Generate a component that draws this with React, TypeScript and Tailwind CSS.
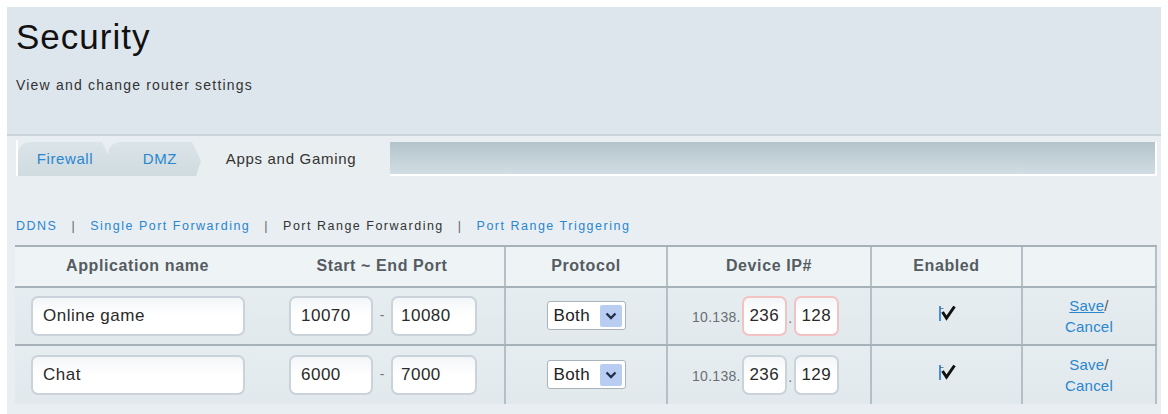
import React from 'react';

const FONT = "font-['Liberation_Sans',Arial,sans-serif]";

// columns: app name | ports | protocol | device ip | enabled | actions
const COLS = 'grid grid-cols-[245px_246px_162px_204px_151px_134px]';

type Row = {
  name: string;
  start: string;
  end: string;
  ip3: string;
  ip4: string;
  warn?: boolean;
  underline?: boolean;
};

const rows: Row[] = [
  { name: 'Online game', start: '10070', end: '10080', ip3: '236', ip4: '128', warn: true, underline: true },
  { name: 'Chat', start: '6000', end: '7000', ip3: '236', ip4: '129' },
];

function TextBox({ value, className = '', warn = false }: { value: string; className?: string; warn?: boolean }) {
  return (
    <div
      className={`h-[40px] flex items-center rounded-[7px] border-2 bg-gradient-to-b from-[#f3f6f8] via-white to-white text-[17px] tracking-[0.5px] text-[#2a2a2a] ${
        warn ? 'border-[#f3c2c2]' : 'border-[#c9d3d9]'
      } ${className}`}
    >
      {value}
    </div>
  );
}

function Check() {
  return (
    <svg width="18" height="18" viewBox="0 0 18 18">
      <rect x="1" y="2" width="2" height="15" fill="#4a90d9" />
      <path d="M4 4 L4 4.5 M4.5 8 L8.5 14 L16.5 2.5" fill="none" stroke="#111" strokeWidth="3" />
    </svg>
  );
}

function Select() {
  return (
    <div className="w-[79px] h-[29px] flex items-center justify-between rounded-[3px] border border-[#a9b3ba] bg-white pl-[6px] pr-[3px]">
      <span className="text-[17px] tracking-[0.4px] text-[#222]">Both</span>
      <span className="w-[22px] h-[22px] flex items-center justify-center bg-[#b9cdf2] rounded-[2px]">
        <svg width="12" height="8" viewBox="0 0 12 8">
          <path d="M1.5 1.5 L6 6 L10.5 1.5" fill="none" stroke="#22304a" strokeWidth="2.4" />
        </svg>
      </span>
    </div>
  );
}

function Tab({ label, active = false, first = false }: { label: string; active?: boolean; first?: boolean }) {
  if (active) {
    return (
      <div className="-ml-[12px] h-[36px] w-[194px] [clip-path:polygon(12px_0,178px_0,194px_100%,0_100%)] bg-[#e9eef1] flex items-center justify-center pt-[2px] pr-[4px] text-[15px] tracking-[0.7px] text-[#333]">
        {label}
      </div>
    );
  }
  return (
    <div
      className={`${first ? '' : '-ml-[10px]'} h-[34px] w-[100px] rounded-t-[12px] [clip-path:polygon(0_0,84px_0,100px_100%,0_100%)] bg-gradient-to-b from-[#dbe4e8] to-[#cfdbe0] flex items-center justify-center text-[15px] tracking-[0.6px] text-[#2a86cf]`}
    >
      <span className={first ? '-ml-[6px]' : 'ml-[4px]'}>{label}</span>
    </div>
  );
}

export default function App() {
  return (
    <div className={`w-[1168px] h-[414px] bg-white pt-[7px] px-[7px] ${FONT}`}>
      {/* page heading */}
      <div className="h-[129px] bg-[#dde6ed] border-b-2 border-[#c9d4db] pl-[9px] pt-[10px]">
        <h1 className="text-[35px] leading-[40px] tracking-[1px] text-[#111]">Security</h1>
        <p className="mt-[18px] text-[14px] tracking-[1.2px] text-[#333]">View and change router settings</p>
      </div>

      <div className="h-[278px] bg-[#e8eef1] pt-[4px] pl-[9px] pr-[4px]">
        {/* tabs */}
        <div className="flex items-end h-[36px] border-l-2 border-white">
          <Tab label="Firewall" first />
          <Tab label="DMZ" />
          <Tab label="Apps and Gaming" active />
          <div className="flex-1 h-[34px] bg-gradient-to-b from-[#b4c4cb] to-[#d1dde3] border-r-2 border-b-2 border-white" />
        </div>

        {/* sub navigation */}
        <div className="mt-[41px] flex items-center text-[12.5px] tracking-[1.5px] text-[#2a86cf]">
          <span>DDNS</span>
          <span className="mx-[14px] text-[#666]">|</span>
          <span>Single Port Forwarding</span>
          <span className="mx-[14px] text-[#666]">|</span>
          <span className="text-[#333]">Port Range Forwarding</span>
          <span className="mx-[14px] text-[#666]">|</span>
          <span>Port Range Triggering</span>
        </div>

        {/* table */}
        <div className="mt-[9px] -ml-[1px] w-[1142px] border-t-2 border-[#a6b1b8]">
          <div className={`${COLS} h-[41px] bg-[#eef3f6] border-b-2 border-[#a6b1b8] text-[16px] font-bold tracking-[0.6px] text-[#555c61]`}>
            <div className="flex items-center justify-center">Application name</div>
            <div className="flex items-center justify-center border-r-2 border-[#b5bfc5]">Start ~ End Port</div>
            <div className="flex items-center justify-center border-r-2 border-[#b5bfc5]">Protocol</div>
            <div className="flex items-center justify-center border-r-2 border-[#b5bfc5]">Device IP#</div>
            <div className="flex items-center justify-center border-r-2 border-[#b5bfc5]">Enabled</div>
            <div className="border-r-2 border-[#b5bfc5]" />
          </div>

          {rows.map((r, i) => (
            <div
              key={r.name}
              className={`${COLS} h-[58px] bg-gradient-to-b from-[#e6edf1] to-[#e2e9ed] ${
                i === 0 ? 'border-b-2 border-[#a6b1b8]' : 'h-[56px]'
              }`}
            >
              <div className="flex items-center pl-[16px]">
                <TextBox value={r.name} className="w-[214px] pl-[10px]" />
              </div>
              <div className="flex items-center pl-[29px] border-r-2 border-[#b5bfc5]">
                <TextBox value={r.start} className="w-[84px] pl-[10px]" />
                <span className="w-[18px] text-center text-[14px] text-[#777]">-</span>
                <TextBox value={r.end} className="w-[86px] pl-[8px]" />
              </div>
              <div className="flex items-center justify-center border-r-2 border-[#b5bfc5]">
                <Select />
              </div>
              <div className="flex items-center pl-[24px] border-r-2 border-[#b5bfc5]">
                <span className="text-[14px] tracking-[0.3px] text-[#6a6f73] mt-[4px]">10.138.</span>
                <TextBox value={r.ip3} warn={r.warn} className="w-[45px] justify-center ml-[1px]" />
                <span className="w-[7px] text-center text-[14px] text-[#6a6f73] mt-[6px]">.</span>
                <TextBox value={r.ip4} warn={r.warn} className="w-[45px] justify-center" />
              </div>
              <div className="flex items-center justify-center pb-[6px] border-r-2 border-[#b5bfc5]">
                <Check />
              </div>
              <div className="flex flex-col items-center justify-center border-r-2 border-[#b5bfc5] text-[15px] leading-[21px] tracking-[0.2px] text-[#2a86cf]">
                <div>
                  <span className={r.underline ? 'underline' : ''}>Save</span>
                  <span className="text-[#555]">/</span>
                </div>
                <div>Cancel</div>
              </div>
            </div>
          ))}
        </div>
      </div>
    </div>
  );
}
